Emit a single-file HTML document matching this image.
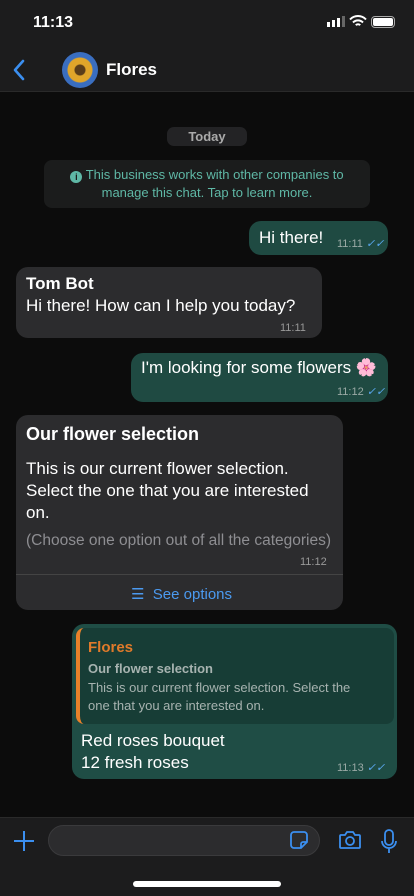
<!DOCTYPE html>
<html><head><meta charset="utf-8"><style>
*{margin:0;padding:0;box-sizing:border-box}
body{width:414px;height:896px;background:#0c0c0c;font-family:"Liberation Sans",Helvetica,sans-serif;color:#fff;position:relative;overflow:hidden}
.abs{position:absolute}
.status{top:0;left:0;width:414px;height:92px;background:#1c1c1d;border-bottom:1px solid #2a2a2a}
.time{left:33px;top:14px;font-size:16px;font-weight:bold}
.bubble{position:absolute;border-radius:12px}
.out{background:#1f4a42}
.in{background:#2c2c2e}
.ts{position:absolute;font-size:11px;color:#9aa9a5}
.tick{color:#5aa8f0;font-style:italic}
</style></head><body>
<div class="abs status"></div>
<div class="abs time">11:13</div>
<div class="abs" style="left:327px;top:22px;width:3px;height:5px;background:#fff"></div>
<div class="abs" style="left:332px;top:20px;width:3px;height:7px;background:#fff"></div>
<div class="abs" style="left:337px;top:18px;width:3px;height:9px;background:#fff"></div>
<div class="abs" style="left:342px;top:16px;width:3px;height:11px;background:#666"></div>
<svg class="abs" style="left:349px;top:15px" width="18" height="13" viewBox="0 0 18 13"><path d="M1 4.5a11 11 0 0 1 16 0M4 7.5a7 7 0 0 1 10 0M6.8 10.2a3 3 0 0 1 4.4 0" stroke="#fff" stroke-width="2" fill="none"/></svg>
<div class="abs" style="left:371px;top:16px;width:24px;height:12px;border:1.5px solid #aaa;border-radius:4px;padding:1px"><div style="width:100%;height:100%;background:#fff;border-radius:2px"></div></div>
<svg class="abs" style="left:12px;top:59px" width="14" height="22" viewBox="0 0 14 22"><path d="M11 2L3 11l8 9" stroke="#3b8ff0" stroke-width="2.6" fill="none" stroke-linecap="round" stroke-linejoin="round"/></svg>
<div class="abs" style="left:62px;top:52px;width:36px;height:36px;border-radius:50%;background:radial-gradient(circle,#5a3d1a 0 5px,#e0a52a 6px 12px,#3a6ec0 13px)"></div>
<div class="abs" style="left:106px;top:60px;font-size:17px;font-weight:bold">Flores</div>

<div class="abs" style="left:167px;top:127px;width:80px;height:19px;border-radius:7px;background:#232325;color:#aaa;font-size:13px;font-weight:bold;text-align:center;line-height:19px">Today</div>
<div class="abs" style="left:44px;top:160px;width:326px;height:48px;border-radius:8px;background:#1b1c1c;color:#5fb8a6;font-size:13px;text-align:center;line-height:18px;padding-top:6px">
<span style="display:inline-block;width:12px;height:12px;border-radius:50%;background:#5fb8a6;color:#1b1c1c;font-size:9px;line-height:12px;font-weight:bold;vertical-align:-1px">i</span> This business works with other companies to<br>manage this chat. Tap to learn more.</div>

<div class="bubble out" style="left:249px;top:221px;width:139px;height:34px"></div>
<div class="abs" style="left:259px;top:228px;font-size:17px">Hi there!</div>
<div class="ts" style="left:337px;top:237px">11:11 <span class="tick">✓✓</span></div>

<div class="bubble in" style="left:16px;top:267px;width:306px;height:71px"></div>
<div class="abs" style="left:26px;top:274px;font-size:17px;font-weight:bold">Tom Bot</div>
<div class="abs" style="left:26px;top:296px;font-size:17px">Hi there! How can I help you today?</div>
<div class="ts" style="left:280px;top:322px;color:#999">11:11</div>

<div class="bubble out" style="left:131px;top:353px;width:257px;height:49px"></div>
<div class="abs" style="left:141px;top:358px;font-size:17px">I'm looking for some flowers <span style="color:#f3a">🌸</span></div>
<div class="ts" style="left:337px;top:385px">11:12 <span class="tick">✓✓</span></div>

<div class="bubble in" style="left:16px;top:415px;width:327px;height:195px"></div>
<div class="abs" style="left:26px;top:424px;font-size:18px;font-weight:bold">Our flower selection</div>
<div class="abs" style="left:26px;top:458px;font-size:17px;line-height:22px">This is our current flower selection.<br>Select the one that you are interested<br>on.</div>
<div class="abs" style="left:26px;top:532px;font-size:15.5px;color:#8e8e92">(Choose one option out of all the categories)</div>
<div class="ts" style="left:300px;top:556px;color:#999">11:12</div>
<div class="abs" style="left:16px;top:574px;width:327px;height:1px;background:#444"></div>
<div class="abs" style="left:131px;top:585px;font-size:15px;color:#4b9af0">☰&nbsp; See options</div>

<div class="bubble out" style="left:72px;top:624px;width:325px;height:155px;background:#1f4d45"></div>
<div class="abs" style="left:76px;top:628px;width:318px;height:96px;border-radius:8px;background:#173d36;border-left:4px solid #e8812a"></div>
<div class="abs" style="left:88px;top:639px;font-size:15px;font-weight:bold;color:#e07a2a">Flores</div>
<div class="abs" style="left:88px;top:661px;font-size:13px;font-weight:bold;color:#a7b3b0">Our flower selection</div>
<div class="abs" style="left:88px;top:679px;font-size:13px;line-height:18px;color:#a7b3b0">This is our current flower selection. Select the<br>one that you are interested on.</div>
<div class="abs" style="left:81px;top:730px;font-size:17px;line-height:22px">Red roses bouquet<br>12 fresh roses</div>
<div class="ts" style="left:337px;top:761px">11:13 <span class="tick">✓✓</span></div>

<div class="abs" style="left:0;top:817px;width:414px;height:79px;background:#1c1c1d;border-top:1px solid #2a2a2a"></div>
<svg class="abs" style="left:12px;top:829px" width="24" height="24"><path d="M12 2v20M2 12h20" stroke="#3b8ff0" stroke-width="2"/></svg>
<div class="abs" style="left:48px;top:825px;width:272px;height:31px;border-radius:16px;background:#2c2c2e;border:1px solid #3a3a3c"></div>
<svg class="abs" style="left:289px;top:830px" width="20" height="20" viewBox="0 0 20 20"><path d="M5 2h10a3 3 0 0 1 3 3v7l-6 6H5a3 3 0 0 1-3-3V5a3 3 0 0 1 3-3zM18 12h-4a2 2 0 0 0-2 2v4" stroke="#3b8ff0" stroke-width="1.8" fill="none"/></svg>
<svg class="abs" style="left:338px;top:829px" width="24" height="22" viewBox="0 0 24 22"><path d="M3 6h4l2-3h6l2 3h4a1 1 0 0 1 1 1v11a1 1 0 0 1-1 1H3a1 1 0 0 1-1-1V7a1 1 0 0 1 1-1z" stroke="#3b8ff0" stroke-width="1.8" fill="none"/><circle cx="12" cy="12" r="4" stroke="#3b8ff0" stroke-width="1.8" fill="none"/></svg>
<svg class="abs" style="left:380px;top:829px" width="18" height="26" viewBox="0 0 18 26"><rect x="5" y="1" width="8" height="15" rx="4" stroke="#3b8ff0" stroke-width="1.8" fill="none"/><path d="M2 12a7 7 0 0 0 14 0M9 19v5" stroke="#3b8ff0" stroke-width="1.8" fill="none"/></svg>
<div class="abs" style="left:133px;top:881px;width:148px;height:6px;border-radius:3px;background:#fff"></div>
</body></html>
